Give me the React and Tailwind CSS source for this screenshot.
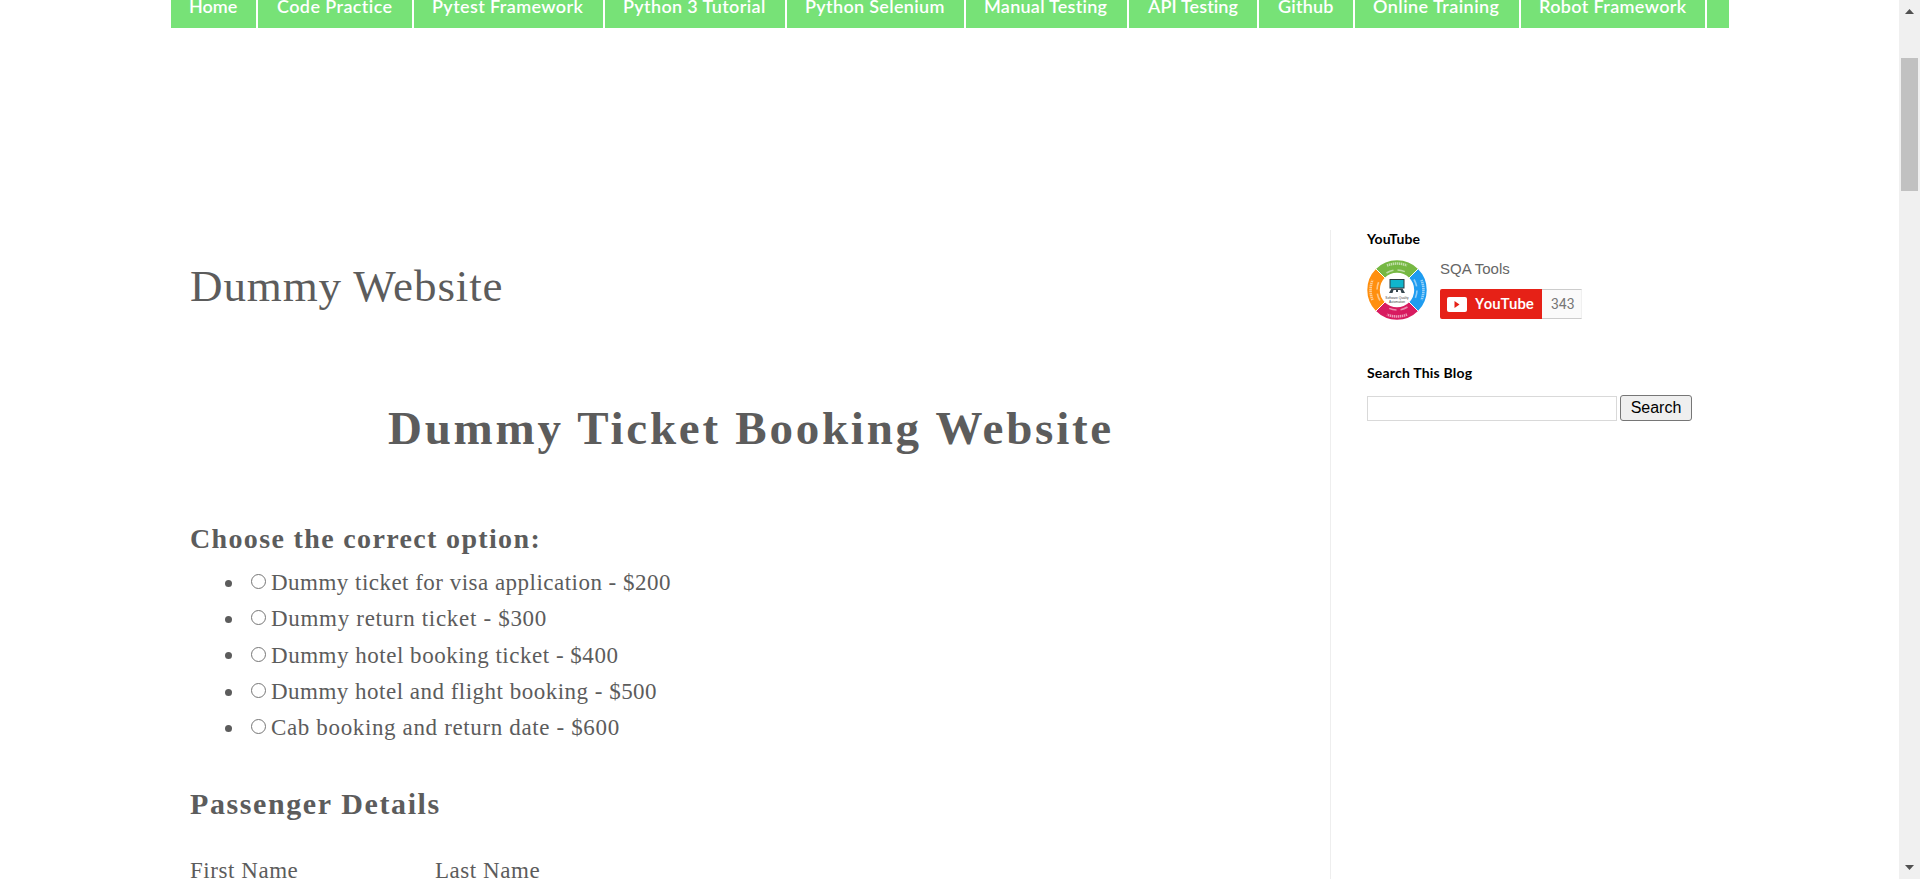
const navItems = [
  { label: "Home", box: "w-[87px]", text: "pl-[18px]" },
  { label: "Code Practice", box: "w-[156px]", text: "pl-[19px] tracking-[0.4px]" },
  { label: "Pytest Framework", box: "w-[191px]", text: "pl-[18px] tracking-[0.38px]" },
  { label: "Python 3 Tutorial", box: "w-[182px]", text: "pl-[18px] tracking-[0.35px]" },
  { label: "Python Selenium", box: "w-[179px]", text: "pl-[18px] tracking-[0.33px]" },
  { label: "Manual Testing", box: "w-[163px]", text: "pl-[18px] tracking-[0.25px]" },
  { label: "API Testing", box: "w-[130px]", text: "pl-[19px] tracking-[0.1px]" },
  { label: "Github", box: "w-[96px]", text: "pl-[19px] tracking-[0.2px]" },
  { label: "Online Training", box: "w-[166px]", text: "pl-[18px] tracking-[0.45px]" },
  { label: "Robot Framework", box: "w-[186px]", text: "pl-[18px] tracking-[0.35px]" },
];

const options = [
  { label: "Dummy ticket for visa application - $200", tracking: "tracking-[0.48px]" },
  { label: "Dummy return ticket - $300", tracking: "tracking-[0.69px]" },
  { label: "Dummy hotel booking ticket - $400", tracking: "tracking-[0.52px]" },
  { label: "Dummy hotel and flight booking - $500", tracking: "tracking-[0.49px]" },
  { label: "Cab booking and return date - $600", tracking: "tracking-[0.64px]" },
];

function NavBar() {
  return (
    <nav className="ml-[171px] flex h-[28px] w-[1558px] overflow-hidden bg-[#77e277] font-['Lato',sans-serif] text-[18px] font-semibold text-white">
      {navItems.map((item) => (
        <a key={item.label} className={"shrink-0 whitespace-nowrap border-r-2 border-white leading-[12px] " + item.box + " " + item.text}>
          {item.label}
        </a>
      ))}
    </nav>
  );
}

function Avatar() {
  return (
    <svg width="60" height="60" viewBox="0 0 60 60" className="shrink-0">
      <g fill="none" strokeWidth="12.5">
        <path d="M13.4 13.4A23.5 23.5 0 0 1 46.6 13.4" stroke="#76b843" />
        <path d="M46.6 13.4A23.5 23.5 0 0 1 46.6 46.6" stroke="#1e9cf0" />
        <path d="M46.6 46.6A23.5 23.5 0 0 1 13.4 46.6" stroke="#d81b60" />
        <path d="M13.4 46.6A23.5 23.5 0 0 1 13.4 13.4" stroke="#ff8f0f" />
      </g>
      <path d="M8 8L20 20M52 8L40 20M8 52L20 40M52 52L40 40" stroke="#fff" strokeWidth="1" />
      <g fill="none" stroke="#fff">
        <path d="M20 5.5A26.5 26.5 0 0 1 40 5.5M54.5 20A26.5 26.5 0 0 1 54.5 40M40 54.5A26.5 26.5 0 0 1 20 54.5M5.5 40A26.5 26.5 0 0 1 5.5 20" strokeWidth="2.6" strokeOpacity=".55" strokeDasharray="1.4 .6" />
        <path d="M19.5 13A20 20 0 0 1 40.5 13M47 19.5A20 20 0 0 1 47 40.5M40.5 47A20 20 0 0 1 19.5 47M13 40.5A20 20 0 0 1 13 19.5" strokeWidth="1.6" strokeOpacity=".5" strokeDasharray="7.5 4" />
      </g>
      <rect x="22.5" y="19" width="15" height="9.5" fill="#2b3a42" />
      <rect x="23.5" y="20" width="13" height="7.5" fill="#0fb5cc" />
      <path d="M24.5 28.5l-2.500 4.500h3.500l1-3H29v2h2v-2h2.500l1 3H38l-2.500-4.500z" fill="#37474f" />
      <g fill="#444" fontSize="3.2" textAnchor="middle" fontFamily="Liberation Sans, sans-serif">
        <text x="30" y="38.6">Software Quality</text>
        <text x="30" y="42.6">Automation</text>
      </g>
    </svg>
  );
}

function Sidebar() {
  return (
    <aside className="w-[569px] border-l border-[#eeeeee] pl-[36px]">
      <h2 className="h-[30px] font-['Lato',sans-serif] text-[14px] font-bold leading-[17px] tracking-[0.1px] text-black">YouTube</h2>
      <div className="flex gap-[13px]">
        <Avatar />
        <div>
          <div className="h-[29px] font-['Liberation_Sans',sans-serif] text-[15px] leading-[18px] text-[#666666]">SQA Tools</div>
          <div className="flex h-[30px] font-['Roboto',sans-serif]">
            <div className="flex w-[102px] items-center gap-[8px] rounded-l-[2px] bg-[#e62117] pl-[7px] text-[15px] font-medium text-white">
              <svg width="20" height="15" viewBox="0 0 20 15">
                <rect width="20" height="15" rx="2" fill="#fff" />
                <path d="M7.500 4v7l5-3.500z" fill="#e62117" />
              </svg>
              <span>YouTube</span>
            </div>
            <div className="flex w-[40px] items-center border-y border-r border-y-[#cccccc] border-r-[#f0f0f0] bg-[#fafafa] pl-[9px] text-[14px] text-[#777777]">343</div>
          </div>
        </div>
      </div>
      <h2 className="mt-[44px] h-[31px] font-['Lato',sans-serif] text-[14px] font-bold leading-[17px] tracking-[0.2px] text-black">Search This Blog</h2>
      <div className="flex items-center gap-[3px]">
        <input className="h-[25px] w-[250px] border border-[#d9d9d9] bg-white" />
        <button className="h-[26px] w-[72px] rounded-[3px] border border-[#767676] bg-[#efefef] font-['Liberation_Sans',sans-serif] text-[16px] leading-[22px] text-black">Search</button>
      </div>
    </aside>
  );
}

function Booking() {
  return (
    <main className="w-[1330px] whitespace-nowrap pl-[190px] pt-[29px] font-['Liberation_Serif',serif] text-[#5c5c5c]">
      <h1 className="h-[54px] text-[45px] leading-[54px] tracking-[0.9px]">Dummy Website</h1>
      <h1 className="mt-[88px] h-[54px] w-[1122px] text-center text-[47px] font-bold leading-[54px] tracking-[2.75px]">Dummy Ticket Booking Website</h1>
      <h3 className="mt-[68px] h-[32px] text-[28px] font-bold leading-[32px] tracking-[1.35px]">Choose the correct option:</h3>
      <ul className="mt-[10px]">
        {options.map((option) => (
          <li key={option.label} className="flex h-[36.3px] items-center pl-[35px]">
            <span className="size-[7px] rounded-full bg-[#5c5c5c]" />
            <span className="mb-[3px] ml-[19px] size-[15px] rounded-full border border-[#767676] bg-white" />
            <span className={"ml-[5px] text-[23px] leading-[36px] " + option.tracking}>{option.label}</span>
          </li>
        ))}
      </ul>
      <h2 className="mt-[41px] h-[34px] text-[30px] font-bold leading-[34px] tracking-[1.6px]">Passenger Details</h2>
      <div className="mt-[35px] flex text-[23px] leading-[30px] tracking-[0.55px]">
        <span className="w-[245px]">First Name</span>
        <span>Last Name</span>
      </div>
    </main>
  );
}

function ScrollBar() {
  return (
    <div className="flex h-[879px] w-[21px] shrink-0 flex-col items-center bg-[#f0f0f0]">
      <svg width="9" height="5" viewBox="0 0 9 5" className="mt-[9px] shrink-0">
        <path d="M0 5L4.500 0 9 5z" fill="#505050" />
      </svg>
      <div className="mt-[44px] h-[133px] w-[17px] bg-[#c1c1c1]" />
      <svg width="9" height="5" viewBox="0 0 9 5" className="mb-[9px] mt-auto shrink-0">
        <path d="M0 0L4.500 5 9 0z" fill="#505050" />
      </svg>
    </div>
  );
}

export default function App() {
  return (
    <div className="flex h-[879px] w-[1920px] overflow-hidden bg-white">
      <div className="flex w-[1899px] flex-col overflow-hidden">
        <NavBar />
        <div className="mt-[202px] flex h-[649px] overflow-hidden">
          <Booking />
          <Sidebar />
        </div>
      </div>
      <ScrollBar />
    </div>
  );
}
